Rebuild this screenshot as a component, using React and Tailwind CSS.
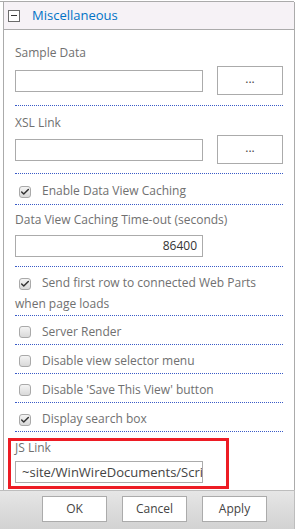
import { Check } from "lucide-react";

function Box({ checked }) {
  return (
    <span className="inline-flex items-center justify-center align-[-2px] ml-[4px] mr-[11px] w-[12px] h-[12px] rounded-[3px] border border-[#a9a9a9] bg-gradient-to-b from-[#f4f4f4] to-[#d9d9d9]">
      {checked && <Check size={10} strokeWidth={3.5} className="text-[#333]" />}
    </span>
  );
}

function Dots() {
  return <div className="border-b border-dotted border-[#3a5bc7]" />;
}

function CheckRow({ checked, children }) {
  return (
    <>
      <div className="pt-[7px] pb-[3px] leading-[18px] text-[#707070]">
        <Box checked={checked} />
        {children}
      </div>
      <Dots />
    </>
  );
}

function PickerField({ label, top, gap, bottom }) {
  return (
    <>
      <div className={top}>
        <div className="leading-[18px] text-[#707070]">{label}</div>
        <div className={`flex items-center justify-between ${gap} ${bottom}`}>
          <div className="w-[188px] h-[22px] border border-[#ababab] bg-white" />
          <button className="w-[66px] h-[29px] border border-[#ababab] bg-white text-[#444] leading-none pb-[4px]">
            ...
          </button>
        </div>
      </div>
      <Dots />
    </>
  );
}

export default function App() {
  return (
    <div className="w-[297px] h-[529px] overflow-hidden bg-white flex flex-col text-[12px] [font-family:'Open_Sans',sans-serif]">
      <div className="mt-[1px] h-px w-[294px] bg-[#ababab]" />
      <div className="ml-[3px] w-[292px] flex-1 flex flex-col border-x border-[#ababab]">
        {/* section header */}
        <div className="h-[28px] flex items-center pl-[4px] bg-[#f6f2f6] border-b border-[#ababab]">
          <span className="relative w-[12px] h-[12px] border border-[#6b6b6b] bg-white">
            <span className="absolute left-[2px] top-[4px] w-[6px] h-px bg-[#333]" />
          </span>
          <span className="ml-[12px] text-[13px] text-[#0072c6] leading-none">Miscellaneous</span>
        </div>

        <div className="flex-1 px-[11px]">
          <PickerField label="Sample Data" top="pt-[14px]" gap="mt-[4px]" bottom="mb-[10px]" />
          <PickerField label="XSL Link" top="pt-[8px]" gap="mt-[3px]" bottom="mb-[9px]" />

          <div className="pt-[8px] pb-[4px] leading-[18px] text-[#707070]">
            <Box checked />
            Enable Data View Caching
          </div>
          <Dots />

          <div className="pt-[6px] pb-[9px]">
            <div className="leading-[18px] text-[#707070]">Data View Caching Time-out (seconds)</div>
            <div className="mt-[6px] w-[188px] h-[22px] border border-[#ababab] bg-white text-right pr-[5px] leading-[20px] text-[#333]">
              86400
            </div>
          </div>
          <Dots />

          <div className="pt-[5px] pb-[1px] leading-[21px] text-[#707070]">
            <Box checked />
            Send first row to connected Web Parts
            <br />
            when page loads
          </div>
          <Dots />

          <CheckRow>Server Render</CheckRow>
          <CheckRow>Disable view selector menu</CheckRow>
          <CheckRow>Disable 'Save This View' button</CheckRow>
          <CheckRow checked>Display search box</CheckRow>

          {/* highlighted JS Link field */}
          <div className="mt-[6px] -ml-[7px] w-[221px] border-[3px] border-[#ed1c24] pl-[4px] pb-[3px]">
            <div className="leading-[14px] text-[#707070]">JS Link</div>
            <div className="mt-[6px] w-[188px] h-[22px] border border-[#ababab] bg-white overflow-hidden whitespace-nowrap pl-[6px] leading-[20px] text-[13px] text-[#444]">
              ~site/WinWireDocuments/Scrip
            </div>
          </div>
        </div>
      </div>

      <div className="h-[39px] w-[295px] shrink-0 border-t border-r border-[#bdbdbd] bg-gradient-to-b from-[#e6e6e6] to-[#d2d2d2] flex gap-[15px] pl-[42px] pt-[5px]">
        {["OK", "Cancel", "Apply"].map((t) => (
          <button key={t} className="w-[65px] h-[26px] border border-[#ababab] bg-white text-[#444] text-[12px] leading-none">
            {t}
          </button>
        ))}
      </div>
    </div>
  );
}
